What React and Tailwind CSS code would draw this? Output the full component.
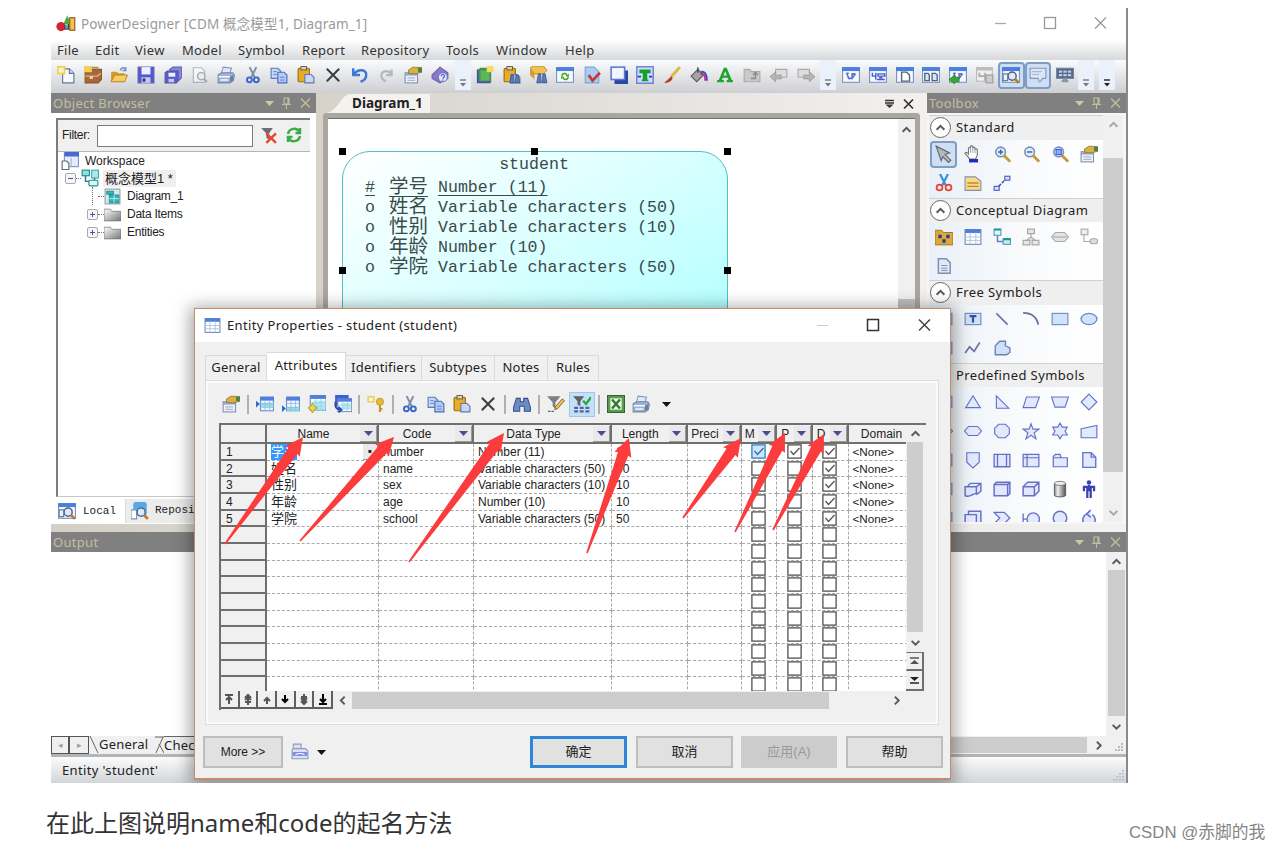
import React from "react";

const BLUE = "#4a5fc0";
const LINE = "#6670c8";

const page = <path d="M3 1.5h7l3 3v10H3z" fill="#fff" stroke="#7d8fae" />;
const win = (
  <>
    <rect x=".5" y="1.5" width="15" height="13" fill="#f4f8ff" stroke="#7b94c8" />
    <rect x="0" y="1" width="16" height="3.5" fill="#4a7fe0" />
  </>
);
const grid = (
  <>
    <rect x="1" y="1.5" width="14" height="13" fill="#fff" stroke="#7188b8" />
    <rect x="1" y="1" width="14" height="3.5" fill="#4f7fdc" />
    <path d="M1 8h14M1 11h14M5.5 4v10M10.5 4v10" stroke="#a9bfdf" strokeWidth=".8" />
  </>
);
const glass = (
  <>
    <circle cx="6.8" cy="6.2" r="4.3" fill="#dcecff" stroke="#7b8fb0" strokeWidth="1.4" />
    <path d="M10.5 10l4 4" stroke="#c99a36" strokeWidth="2.6" strokeLinecap="round" />
  </>
);
const props = (
  <>
    <rect x="1" y="6" width="11" height="9" fill="#eef3fb" stroke="#8292ae" />
    <path d="M1 7.500h11" stroke="#8fa3c6" strokeWidth="2" />
    <path d="M3 10.500h7M3 12.800h7" stroke="#a9b8d3" />
    <path d="M4 6.500V3.500l4-2.500 8 .5v4l-6 1.500z" fill="#d9b23d" stroke="#8a7430" strokeWidth=".7" />
    <path d="M12.500 1.500H16v4h-3.500z" fill="#4f7f4a" />
  </>
);
const clip = (
  <>
    <rect x="1" y="2" width="10" height="12" rx="1" fill="#e8ad27" stroke="#9a6b12" />
    <rect x="3.5" y=".5" width="5" height="3" fill="#d8d2bf" stroke="#5f5538" strokeWidth=".8" />
    <path d="M7 7.500h5.500l2.500 2.500v5H7z" fill="#c9d8f2" stroke="#5f79ae" />
  </>
);
const printer = (
  <>
    <path d="M5.500 1l7.500 1-2 5.500H3.500z" fill="#dfe9fb" stroke="#8797b7" strokeWidth=".9" />
    <path d="M1 8l3-2h10l1.500 2-1 5-3 2H1z" fill="#9fb2d0" stroke="#7385a8" strokeWidth=".9" />
    <path d="M1.500 9.500h10M3 12.500h7" fill="none" stroke="#f5f8ff" strokeWidth="1.400" />
    <path d="M11.500 9.500v5l3-2V8z" fill="#6b7f9f" />
  </>
);
const scissors = (
  <>
    <path d="M5 1l4.500 9M11 1L6.500 10" stroke="#7a8ca8" strokeWidth="1.700" />
    <circle cx="4.800" cy="12.300" r="2.200" fill="none" stroke="#3b66c8" strokeWidth="1.700" />
    <circle cx="11" cy="12.300" r="2.200" fill="none" stroke="#3b66c8" strokeWidth="1.700" />
  </>
);
const copy = (
  <>
    <path d="M1 2h6l2.500 2.500V11H1z" fill="#c5d8fa" stroke="#5a7ac0" />
    <path d="M7 5.500h5.500L15 8v7H7z" fill="#b3cbf6" stroke="#4a6bb5" />
    <path d="M3 5h3M3 7.500h3M9 10h4M9 12.500h4" stroke="#5a7ac0" strokeWidth=".8" />
  </>
);
const cross = <path d="M2.500 2.500l11 11M13.500 2.500l-11 11" stroke="#3d3d3d" strokeWidth="1.800" />;
const boxLinks = (
  <path d="M4 6l2 5h3V7h3M4 6.500h2M9 11l3-4" fill="none" stroke="#5f6fd2" strokeWidth="1.400" />
);

const icons = {
  logo: (
    <>
      <path d="M6 8l3-7 3 7z" fill="#49ad3c" />
      <rect x="11" y="3" width="4" height="10" fill="#f2c44c" stroke="#9f5f2c" />
      <circle cx="4" cy="10" r="3.700" fill="#d62430" />
      <path d="M7 8.500v3.500h3V8" fill="#5fb0a8" stroke="#59413d" />
    </>
  ),
  newDoc: (
    <>
      <path d="M5 2.500h6l4 4V15H5z" fill="#f6f9ff" stroke="#60789c" />
      <path d="M11 2.500v4h4" fill="#cdd9ec" stroke="#60789c" />
      <rect x=".7" y=".7" width="6" height="6" fill="#fbf3c4" stroke="#f0cf4c" strokeWidth="1.500" />
    </>
  ),
  briefcase: (
    <>
      <path d="M1 5.500L4 3h11.500v9l-3 3H1z" fill="#a8673a" stroke="#8a5630" />
      <path d="M1 9h11l3-2.500" stroke="#e0b083" fill="none" strokeWidth="1.300" />
      <path d="M7 3V1.500h5V3" fill="none" stroke="#b98b4d" strokeWidth="1.500" />
      <rect x="0" y="0" width="7" height="5.500" fill="#f2d057" />
      <path d="M5 9h3v2.500H5z" fill="#e8d2a0" />
    </>
  ),
  open: (
    <>
      <path d="M1 5h5l1.500 1.500H13V14H1z" fill="#d79a2b" />
      <path d="M1 14l3-6h11.500L13 14z" fill="#f8cd63" stroke="#b17d1e" strokeWidth=".8" />
      <path d="M9 4c1-3 4-3 5-1m0-2v3h-3" fill="none" stroke="#6f8fc2" strokeWidth="1.300" />
    </>
  ),
  save: (
    <>
      <rect x="1" y="1" width="14" height="14" fill="#5359c6" stroke="#5a5cb8" />
      <rect x="4" y="1" width="8" height="6.500" fill="#eef0ff" />
      <rect x="4" y="10" width="8" height="5" fill="#c6c9ee" />
      <rect x="5" y="11" width="2.500" height="3" fill="#34367c" />
    </>
  ),
  saveAll: (
    <>
      <path d="M5 3l3-2h8v9l-3 3z" fill="#8486dc" stroke="#5f60b5" />
      <path d="M1 6l2-1.500h9.500V13L11 15H1z" fill="#5b5ec9" stroke="#5455a8" />
      <rect x="4" y="6" width="6" height="3.500" fill="#eceeff" />
      <rect x="4" y="11.500" width="5" height="3" fill="#c2c5ee" />
    </>
  ),
  preview: (
    <g opacity=".55">
      {page}
      <circle cx="10" cy="9" r="3.300" fill="#eee" stroke="#808080" strokeWidth="1.300" />
      <path d="M12.500 11.500L15 14" stroke="#808080" strokeWidth="2" />
    </g>
  ),
  printer,
  scissors,
  copy,
  paste: clip,
  cross,
  undo: <path d="M2 2v6h6M2.500 7.500C6 2 14 3 13.500 8c0 3-2 5-5 6" fill="none" stroke="#3c78d8" strokeWidth="2.200" />,
  redo: <path d="M13 3v5H8M13 7.500C10 3 3 4 4 9c0 2 1.500 3.500 4 4.500" fill="none" stroke="#b5b8bb" strokeWidth="2" />,
  props,
  book: (
    <>
      <path d="M1 8l7-7 7 5v5l-7 4-7-4z" fill="#8a78cb" stroke="#7060b4" />
      <circle cx="10.500" cy="10" r="4" fill="#dfe6ff" stroke="#6b79c4" />
      <path d="M9 9c0-2 3-2 3 0 0 1-1.500 1-1.500 2.300m0 .7v1" fill="none" stroke="#4254b5" />
    </>
  ),
  greenBook: (
    <>
      <path d="M2 4l2-2h9v12H2z" fill="#3f9a48" stroke="#4a7f5f" />
      <path d="M4 4h8v9H4z" fill="#5cb45c" />
      <path d="M1.500 3v11.500H13" stroke="#3c55a4" strokeWidth="1.500" fill="none" />
      <rect x="9.500" y="0" width="6" height="5.500" fill="#f6dc61" />
    </>
  ),
  pasteFind: (
    <>
      {clip}
      <path d="M6 15l1.500-7h2l.5 7zM11 15l.5-7h2l1.500 7z" fill="#5d7cb8" stroke="#33518d" strokeWidth=".7" />
    </>
  ),
  boxFind: (
    <>
      <path d="M0 2l3-2h9l3 4-3 3H4z" fill="#f0c253" stroke="#a97920" strokeWidth=".7" />
      <path d="M0 2v6l4 4V6z" fill="#d99c33" />
      <path d="M6 15l1.500-8h2l.5 8zM11 15l.5-8h2L15 15z" fill="#5d7cb8" stroke="#33518d" strokeWidth=".7" />
    </>
  ),
  refreshWin: (
    <>
      {win}
      <path d="M5 8.500c1-2.500 4-2.500 5 0M11 10c-1 2.500-4 2.500-5 0" fill="none" stroke="#55aa1f" strokeWidth="1.600" />
      <path d="M11.500 6.500v3H9zM4.500 12V9H7z" fill="#55aa1f" />
    </>
  ),
  checkDoc: (
    <>
      <path d="M2 1h8l4 4v10H2z" fill="#a9cdf2" stroke="#7ba5d9" />
      <path d="M5 8l3.500 5L15 6" fill="none" stroke="#c53a35" strokeWidth="2.500" />
    </>
  ),
  shadowBox: (
    <>
      <rect x="4" y="4" width="12" height="12" fill="#274a9e" />
      <rect x="1" y="1" width="12" height="11" fill="#f1f5ff" stroke="#6076d2" strokeWidth="1.400" />
    </>
  ),
  textBox: (
    <>
      <rect x=".7" y=".7" width="14.600" height="14.600" fill="#cfdbff" stroke="#6a78d4" strokeWidth="1.200" />
      <path d="M3 3h10v3.500h-3V12h1v1.500H5V12h1V6.500H3z" fill="#13a324" />
      <path d="M1.500 9.500h3M11.500 9.500h3" stroke="#2f3fc0" strokeWidth="1.500" />
    </>
  ),
  brush: (
    <>
      <path d="M15 1L7 10" stroke="#e2b544" strokeWidth="2.600" />
      <path d="M7.500 9L1 15c3 0 6-1 7.500-4z" fill="#b5392c" />
    </>
  ),
  bucket: (
    <>
      <path d="M1 9l6-6 5 5-6 6z" fill="#a5a5a5" stroke="#5e5e5e" />
      <path d="M7 6V1" stroke="#444" strokeWidth="1.200" />
      <path d="M10 5c4 0 5 3 5 8" fill="none" stroke="#374cc8" strokeWidth="1.800" />
      <path d="M9 7c4 0 4.500 2 4.500 6" fill="none" stroke="#c8327a" strokeWidth="1.600" />
    </>
  ),
  bigA: <path d="M1 14.500v-2h1.500L7 1.500h2.500L14 12.500h1v2H9.500v-2H11l-.7-2H6l-.7 2H7v2zM6.700 8.500h3L8.200 4.700z" fill="#1fa52b" fillRule="evenodd" />,
  grayFolder: (
    <>
      <path d="M1 3h5l1.500 2H15v9H1z" fill="#c9c9c9" stroke="#aaa" />
      <path d="M7 11h4V6m-2 2l2-2.500L13 8" fill="none" stroke="#8d8d8d" strokeWidth="1.400" />
    </>
  ),
  grayLeft: (
    <>
      <path d="M5 6V3h10v7H9" fill="#ddd" stroke="#aaa" />
      <path d="M0 9.500L5 5v3h5v3.500H5V14z" fill="#b5b5b5" stroke="#929292" strokeWidth=".6" />
    </>
  ),
  grayRight: (
    <>
      <path d="M11 6V3H1v7h6" fill="#ddd" stroke="#aaa" />
      <path d="M16 9.500L11 5v3H6v3.500h5V14z" fill="#b5b5b5" stroke="#929292" strokeWidth=".6" />
    </>
  ),
  winLink: (
    <>
      {win}
      {boxLinks}
    </>
  ),
  winGrid: (
    <>
      {win}
      <path d="M3 6v3h3V6M6 9v3M8 7h6v2H8zM7 12h7M9 10.500h3" fill="none" stroke="#4a5cc8" strokeWidth="1.300" />
    </>
  ),
  winDoc: (
    <>
      {win}
      <path d="M5 5.500h4.500L12 8v5.500H5z" fill="#fff" stroke="#54637c" strokeWidth="1.200" />
    </>
  ),
  winDocs: (
    <>
      {win}
      <path d="M2.500 6.500h3l1 1.500v5h-4zM9 6.500h3L13.500 8v5H9z" fill="#dce5f3" stroke="#54637c" strokeWidth="1.200" />
    </>
  ),
  winGreen: (
    <>
      {win}
      {boxLinks}
      <path d="M0 12l5-4v2h4v4H5v2z" fill="#35aa32" stroke="#1d7a24" strokeWidth=".6" />
    </>
  ),
  winGray: (
    <>
      <rect x=".5" y="1.500" width="14" height="12" fill="#efefef" stroke="#bbb" />
      <rect x="0" y="1" width="15" height="3" fill="#bdbdbd" />
      <path d="M3 6v3h5V6M8 9v4" fill="none" stroke="#aaa" strokeWidth="1.500" />
      <rect x="9" y="8" width="6" height="7" fill="#ccc" stroke="#9d9d9d" />
    </>
  ),
  winFind: (
    <>
      {win}
      <circle cx="9" cy="9" r="3.600" fill="#dcebfb" stroke="#4d5c76" strokeWidth="1.300" />
      <path d="M11.500 11.500L15 15" stroke="#c07a2b" strokeWidth="2.500" />
      <path d="M1 7h4v6H1z" fill="#e9eef8" stroke="#6a7c9d" />
    </>
  ),
  note: (
    <>
      <path d="M1 2h14v9h-3l-2 3H9l-1-3H1z" fill="#dce5f5" stroke="#8496bb" />
      <path d="M3 5h8M3 7.500h6" stroke="#a5b4d2" />
    </>
  ),
  screen: (
    <>
      <rect x=".5" y="2" width="15" height="9" fill="#57647a" stroke="#7186a9" />
      <path d="M2.500 4h3v2h-3zM6.500 4h3v2h-3zM10.500 4h3v2h-3zM2.500 7h3v2h-3zM6.500 7h3v2h-3zM10.500 7h3v2h-3z" fill="#b9cbf2" />
      <path d="M5 13.500h6M6 12h4" stroke="#8997ae" strokeWidth="2" />
    </>
  ),
  filterOff: (
    <>
      <path d="M1 1h11L8.500 6v6L6 10V6z" fill="#6b6f77" />
      <path d="M6 6l9 9M15 6l-9 9" stroke="#e8452c" strokeWidth="2.200" />
    </>
  ),
  refresh: (
    <path d="M2 7C3 1 11 0 13.500 5M14 9c-1 6-9 7-11.500 2M14 1v5H9.500M2 15v-5h4.500" fill="none" stroke="#3faa48" strokeWidth="2.500" />
  ),
  workspace: (
    <>
      <rect x="3" y="1" width="12.500" height="12" fill="#e6edfa" stroke="#7f97cb" />
      <rect x="3" y="0" width="13" height="4" fill="#4668d0" />
      <path d="M1 8h4l2 2v5.500H1z" fill="#fff" stroke="#5d6b82" />
      <path d="M9 5v8" stroke="#9fb3dc" />
    </>
  ),
  model: (
    <>
      <rect x="1" y="1" width="6.500" height="5" fill="#8fe0e0" stroke="#238b93" />
      <rect x="9.500" y="1" width="6" height="7" fill="#a7ecec" stroke="#49a9b0" />
      <path d="M4 6v5h4M12 8v3" fill="none" stroke="#1f7f88" strokeWidth="1.300" />
      <rect x="7" y="10" width="8" height="5" rx="1" fill="#d7f8f6" stroke="#238b93" />
    </>
  ),
  diagram: (
    <>
      <rect x="1" y="1" width="14" height="14" fill="#d7e8e8" stroke="#8f9fa3" />
      <path d="M2.500 3H9v3H2.500zM5 6.500h9V14H5z" fill="#2fb7ba" stroke="#15787e" strokeWidth=".6" />
      <path d="M5 10h9M9.500 6.500V14" stroke="#c7f4f3" strokeWidth=".8" />
    </>
  ),
  folder: <path d="M0 14V3h6l2 2h8v9z" fill="url(#folderGray)" stroke="#777" strokeWidth=".7" />,
  globe: (
    <>
      <rect x="2" y="0" width="12" height="12" rx="2" fill="#57a9e4" />
      <path d="M0 7h5v8H0z" fill="#fff" stroke="#7f93b5" />
      <circle cx="9" cy="9" r="3.600" fill="#dcebfb" stroke="#4d6b96" strokeWidth="1.300" />
      <path d="M11.500 11.500L15 15" stroke="#c07a2b" strokeWidth="2.500" />
    </>
  ),
  pointer: <path d="M1 1l12 6-4 1.500 5 5-2 2-5-5L5.500 14z" fill="#b4b8bd" stroke="#62676f" />,
  hand: (
    <>
      <path d="M4 11L1 7.500c0-1.500 2-1 3 .5V3c0-1.300 1.800-1.300 1.800 0V1.500c0-1.300 2-1.300 2 0V3c0-1.500 2-1.500 2 0v1.500c0-1.500 2-1.200 2 0V9l-1.500 3.500H5z" fill="#fff" stroke="#777" />
      <path d="M5.800 3v4M7.800 3v4M9.800 4v3.500" stroke="#888" strokeWidth=".7" />
      <rect x="4.500" y="12.500" width="8" height="3" fill="#1a28c4" />
    </>
  ),
  zoomIn: (
    <>
      {glass}
      <path d="M4.500 6.200h4.600M6.800 4v4.500" stroke="#3b62b0" strokeWidth="1.300" />
    </>
  ),
  zoomOut: (
    <>
      {glass}
      <path d="M4.500 6.200h4.600" stroke="#3b62b0" strokeWidth="1.300" />
    </>
  ),
  zoomFit: (
    <>
      {glass}
      <rect x="4.500" y="4" width="4.600" height="4.500" fill="#8caeff" stroke="#3f62e8" />
    </>
  ),
  redScissors: (
    <>
      <path d="M4.500 0l5 10M11.500 0l-5 10" stroke="#3a8fe0" strokeWidth="2" />
      <circle cx="4" cy="12" r="2.600" fill="none" stroke="#e5432f" strokeWidth="1.600" />
      <circle cx="12" cy="12" r="2.600" fill="none" stroke="#e5432f" strokeWidth="1.600" />
    </>
  ),
  yellowNote: (
    <>
      <path d="M1 2.500h9l5 4v8H1z" fill="#f7d987" stroke="#8a8fae" />
      <path d="M3 8h10M3 11h10" stroke="#b98b33" strokeWidth="1.300" />
    </>
  ),
  link: (
    <>
      <path d="M5 11l6-6" stroke="#3f4db8" strokeWidth="1.300" strokeDasharray="3 1" />
      <rect x="1" y="11" width="4.500" height="3.500" fill="#dbe2ff" stroke={BLUE} />
      <rect x="10.500" y="2" width="4.500" height="3.500" fill="#dbe2ff" stroke={BLUE} />
    </>
  ),
  package: (
    <>
      <path d="M0 2h6l1.500 2H16v11H0z" fill="#dfa93a" stroke="#9c7022" strokeWidth=".8" />
      <path d="M3 6h3v3H3zM10 6h3v3h-3zM6.500 10h3v3h-3z" fill="#2d3a9a" />
    </>
  ),
  grid,
  relation: (
    <>
      <path d="M4 7v5h5" fill="none" stroke="#6b74d4" strokeWidth="1.300" />
      <rect x="1" y="1" width="6" height="5.500" fill="#dcfafa" stroke="#4f9fb0" />
      <rect x="9" y="9.500" width="6.500" height="5" fill="#bff1f1" stroke="#4f9fb0" />
      <path d="M1 1.500h6M9 10h6.500" stroke="#1f8f98" strokeWidth="1.600" />
    </>
  ),
  inherit: (
    <path d="M5 1h6v4H5zM1 11h6v4H1zM9 11h6v4H9zM8 5v3M4 11l4-3 4 3" fill="#e8e8e8" stroke="#a9a9a9" strokeWidth="1.100" />
  ),
  assoc: (
    <>
      <path d="M4 4h8l3.500 4-3.500 4H4L.5 8z" fill="#e3e3e3" stroke="#a9a9a9" />
      <path d="M2 8h12" stroke="#a9a9a9" />
    </>
  ),
  assocLink: (
    <>
      <path d="M3.500 6v6H9" fill="none" stroke="#a9a9a9" />
      <rect x="1" y="1" width="6" height="5" fill="#eee" stroke="#a9a9a9" />
      <rect x="9" y="9.500" width="6.500" height="4.500" rx="2" fill="#ddd" stroke="#a9a9a9" />
    </>
  ),
  file: (
    <>
      <path d="M3 1.500h7l3.500 3.500v9.500H3z" fill="#dfe9f8" stroke="#7f90ae" strokeWidth="1.300" />
      <path d="M5.500 7.500h5.500M5.500 10h5.500M5.500 12h5.500" stroke="#7e92b6" />
    </>
  ),
  tBox: (
    <>
      <rect x="1" y="3" width="14" height="10" fill="#cfe0fb" stroke="#6f8ac2" />
      <path d="M5 5.500h6M8 5.500v5.500" stroke="#3b4fa0" strokeWidth="2" />
    </>
  ),
  line: <path d="M3 3l10 10" stroke="#66719e" strokeWidth="1.400" />,
  arc: <path d="M1 2.500C8 2.500 13 6 14.500 13" fill="none" stroke="#66719e" strokeWidth="1.600" />,
  rect: <rect x="1" y="3" width="14" height="10" fill="#cfe3fb" stroke="#6a8cc8" />,
  ellipse: <ellipse cx="8" cy="8" rx="7" ry="5" fill="#cfe3fb" stroke="#6a8cc8" strokeWidth="1.200" />,
  poly: <path d="M1 12.500L5 7l4 4 5-8" fill="none" stroke="#66719e" strokeWidth="1.500" />,
  freeform: <path d="M2 14V6l4-4h5c1 2-1 3 0 4l4 2v4l-3 2z" fill="#cfe0fb" stroke="#6a7fb8" strokeWidth="1.200" />,
  triangle: <path d="M8 2.500L14.500 13h-13z" fill="#e1eafd" stroke={LINE} />,
  rtriangle: <path d="M3 2.500L14 13.500H3z" fill="#e1eafd" stroke={LINE} />,
  parallelogram: <path d="M4 3.500h11.500L12 13H1z" fill="#e1eafd" stroke={LINE} />,
  trapezoid: <path d="M.5 3.500h15L12.500 12.500h-9z" fill="#e1eafd" stroke={LINE} />,
  diamond: <path d="M8 1l7 7-7 7-7-7z" fill="#e1eafd" stroke={LINE} />,
  hexagon: <path d="M4 4h8l3.500 4-3.500 4H4L.5 8z" fill="#e1eafd" stroke={LINE} />,
  octagon: <path d="M5 2h6l3.500 3.500v5L11 14H5l-3.500-3.500v-5z" fill="#e1eafd" stroke={LINE} />,
  star: <path d="M8 1.500l1.700 4.800H15l-4.200 3.200L12.500 15 8 11.800 3.500 15l1.700-5.500L1 6.300h5.300z" fill="#e1eafd" stroke={LINE} />,
  star6: <path d="M8 1l2 3.500h4.500L12.500 8l2 3.500H10L8 15l-2-3.500H1.500l2-3.500-2-3.500H6z" fill="#e1eafd" stroke={LINE} />,
  manual: <path d="M1 6l14-3v11H1z" fill="#e1eafd" stroke={LINE} />,
  shield: <path d="M2.500 1.500h11V10L8 15l-5.500-5z" fill="#e1eafd" stroke={LINE} />,
  process: <path d="M1 3h14v11H1zM4 3v11M12 3v11" fill="#e1eafd" stroke={LINE} strokeWidth="1.200" />,
  storage: <path d="M1 3h14v11H1zM1 6h14M4.500 3v11" fill="#e1eafd" stroke={LINE} strokeWidth="1.100" />,
  tabFolder: <path d="M2 14V5l2-2h4l1 3h5.500v8zM2 6h7" fill="#e1eafd" stroke={LINE} strokeWidth="1.100" />,
  docFold: <path d="M2.500 1.500H10l4 4v9H2.500zM10 1.500v4h4" fill="#e1eafd" stroke={LINE} strokeWidth="1.200" />,
  stackDoc: <path d="M1 6h10v6c-4 0-5 4-10 2zM3 6l2.500-3H15v7l-4 3M11 6l4-3" fill="#e1eafd" stroke={LINE} strokeWidth="1.300" />,
  bevel: <path d="M1 4l2-2h12v10l-2 2H1zM1 4h12v10M13 4l2-2" fill="#e1eafd" stroke={LINE} strokeWidth="1.300" />,
  cube: <path d="M1 6l4-4h10v8l-4 4H1zM1 6h10v8M11 6l4-4" fill="#e1eafd" stroke={LINE} strokeWidth="1.300" />,
  cylinder: (
    <>
      <path d="M3 3v10.500c0 2 10 2 10 0V3z" fill="url(#cyl)" stroke="#555" strokeWidth=".8" />
      <ellipse cx="8" cy="3" rx="5" ry="1.800" fill="#eee" stroke="#777" strokeWidth=".8" />
    </>
  ),
  person: (
    <>
      <circle cx="8" cy="2.300" r="2" fill="#3b3fb5" />
      <path d="M8 4.500V10M3.500 10V6h9v4M6.500 6v10M9.500 6v10" fill="none" stroke="#3b3fb5" strokeWidth="2" />
    </>
  ),
  frames: <path d="M4 5V2h11v12h-4M1 5h10v11H1z" fill="#e1eafd" stroke={LINE} strokeWidth="1.300" />,
  chevronShape: <path d="M1 3h9l5 5-5 5H1l5-5z" fill="#e1eafd" stroke={LINE} strokeWidth="1.100" />,
  circleBar: <path d="M1 4v10M1 9h3M15.500 9a5.500 5.500 0 1 1-11 0 5.500 5.500 0 0 1 11 0z" fill="#e1eafd" stroke={LINE} strokeWidth="1.200" />,
  circle: <circle cx="8" cy="8" r="6" fill="#e1eafd" stroke={LINE} strokeWidth="1.300" />,
  control: <path d="M6 4.500a5.500 5.500 0 1 0 5 .5M9.500 1L6 4.300 9.500 7.500" fill="#e1eafd" stroke={LINE} strokeWidth="1.400" />,
  insertRow: (
    <>
      <rect x="4" y="2" width="11.500" height="12" fill="#f2f7ff" stroke="#6f8fc9" />
      <rect x="4" y="1.500" width="12" height="3.500" fill="#4f7fdc" />
      <rect x="4.500" y="7" width="11" height="3.500" fill="#7fe3ea" />
      <path d="M4 7.500h11.500M4 11h11.500M8 5v9M12 5v9" stroke="#9fb9e2" strokeWidth=".8" />
      <path d="M0 5l3.500 3L0 11z" fill="#3567d8" />
    </>
  ),
  addRow: (
    <>
      <rect x="4" y="2" width="11.500" height="12" fill="#f2f7ff" stroke="#6f8fc9" />
      <rect x="4" y="1.500" width="12" height="3.500" fill="#4f7fdc" />
      <rect x="4.500" y="10.500" width="11" height="3.500" fill="#7fe3ea" />
      <path d="M4 7.500h11.500M4 11h11.500M8 5v9M12 5v9" stroke="#9fb9e2" strokeWidth=".8" />
      <path d="M0 9l3.500 3L0 15z" fill="#3567d8" />
    </>
  ),
  gridStar: (
    <>
      <g transform="translate(1 -1)">{grid}</g>
      <rect x="5" y="5" width="10" height="9" fill="#8cdff0" opacity=".7" />
      <path d="M4 7l1.500 3 3 1.500-3 1.500L4 16l-1.500-3-2.500-1.500L2.500 10z" fill="#f4d844" stroke="#b08d17" strokeWidth=".7" />
    </>
  ),
  gridReplace: (
    <>
      <rect x="1" y="0" width="12" height="10" fill="#3b5fd0" />
      <g transform="translate(2.500 2) scale(.88)">{grid}</g>
      <rect x="7" y="7" width="7.500" height="6" fill="#8cdff0" opacity=".7" />
      <path d="M1.500 6c-1 5 1 7 4 7m-1.500-2.500L6.500 13 4 15.500" fill="none" stroke="#2346b8" strokeWidth="1.700" />
    </>
  ),
  keys: (
    <>
      <rect x="1" y="1.500" width="5" height="4.500" fill="#fbf5d8" stroke="#eed062" strokeWidth="1.500" />
      <circle cx="11.500" cy="6" r="3.200" fill="#e7b93a" stroke="#c0952e" strokeWidth=".8" />
      <path d="M11.500 9v6M11.500 12.500h2.200" stroke="#c99628" strokeWidth="1.900" />
    </>
  ),
  binoculars: (
    <path d="M3 3h3.500v3h3V3H13l2.500 8v3.500H10V10H6v4.500H.5V11z" fill="#6d8cc6" stroke="#324f8c" strokeWidth=".9" />
  ),
  filterEdit: (
    <>
      <path d="M0 1h12L7.500 6.500V12L5 10V6.500z" fill="#7c7f86" />
      <path d="M15.500 5l-6 7-2.500 1 .5-2.500L13.500 3.500z" fill="#f0c65a" stroke="#7a5320" strokeWidth=".8" />
      <path d="M1 14.500h6" stroke="#555" strokeDasharray="2 1" />
    </>
  ),
  filterOn: (
    <>
      <path d="M0 1h10L6.500 5.500V10L4 8.500v-3z" fill="#5e6268" />
      <path d="M9 5l2.500 3L16 2" fill="none" stroke="#25a834" strokeWidth="2" />
      <path d="M1 11.500h14M1 14.500h14" stroke="#4b66ad" strokeWidth="2" strokeDasharray="3.500 1.500" />
    </>
  ),
  excel: (
    <>
      <rect x=".5" y=".5" width="15" height="15" fill="#5f9f55" stroke="#2f6a2c" />
      <rect x="3" y="3" width="10" height="10" fill="#eff8ec" />
      <path d="M4.500 4l7 8M11.500 4l-7 8" stroke="#2c7a2b" strokeWidth="2.200" />
    </>
  ),
  stackPrint: (
    <>
      <path d="M2 1h7v4H2zM2 5h11l2 2v7H1V6z" fill="#d9e0ef" stroke="#8f9cba" />
      <path d="M1.500 8h13v3.500h-13z" fill="#7f8be8" />
      <path d="M4 10.500c2-1.500 6-1.500 8 0" stroke="#fff" fill="none" />
    </>
  ),
};

const Icon = ({ name, size = 18 }) => (
  <svg width={size} height={size} viewBox="0 0 16 16" className="shrink-0">
    {icons[name]}
  </svg>
);

const Chevron = ({ dir = "up", light }) => {
  const d = {
    up: "M1.500 7L5 3.500 8.500 7",
    down: "M1.500 3.500L5 7l3.500-3.500",
    left: "M7 1.500L3.500 5 7 8.500",
    right: "M3.500 1.500L7 5 3.500 8.500",
  }[dir];
  return (
    <svg width="11" height="11" viewBox="0 0 10 10" className="shrink-0">
      <path d={d} fill="none" stroke={light ? "#a8a8a8" : "#5a5a5a"} strokeWidth="1.800" />
    </svg>
  );
};

const Caret = ({ color = "#111" }) => (
  <svg width="9" height="5" viewBox="0 0 9 5" className="shrink-0">
    <path d="M0 0h9L4.500 5z" fill={color} />
  </svg>
);

const More = ({ dark }) => (
  <svg width="8" height="8" viewBox="0 0 8 8">
    <path d="M1 1h6" stroke={dark ? "#222" : "#777"} strokeWidth="1.400" />
    <path d="M1 4h6L4 7.500z" fill={dark ? "#222" : "#777"} />
  </svg>
);

const PanelHeader = ({ title }) => (
  <div className="flex h-5 shrink-0 items-center bg-[#808080] pl-0.5 text-[13px] text-[#c3bf9c]">
    <span className="flex-1 pt-px tracking-[0.300px]">{title}</span>
    <Caret color="#cdc9a0" />
    <svg width="34" height="12" viewBox="0 0 34 12" className="ml-2">
      <path d="M2 1h5v6H2zM0 7.500h9M4.500 8v4M6 1v6" fill="none" stroke="#c3bf9c" strokeWidth="1.100" />
      <path d="M19 1.500l9 9M28 1.500l-9 9" stroke="#c3bf9c" strokeWidth="1.300" />
    </svg>
  </div>
);

const menus = [
  ["File", "w-[38px]"],
  ["Edit", "w-[40px]"],
  ["View", "w-[47px]"],
  ["Model", "w-[56px]"],
  ["Symbol", "w-[64px]"],
  ["Report", "w-[59px]"],
  ["Repository", "w-[85px]"],
  ["Tools", "w-[50px]"],
  ["Window", "w-[69px]"],
  ["Help", "w-[40px]"],
];

const toolbarA = ["newDoc", "briefcase", "open", "save", "saveAll", "preview", "printer", "scissors", "copy", "paste", "cross", "undo", "redo", "props", "book"];
const toolbarB = ["greenBook", "pasteFind", "boxFind", "refreshWin", "checkDoc", "shadowBox", "textBox", "brush", "bucket", "bigA", "grayFolder", "grayLeft", "grayRight"];
const toolbarC = ["winLink", "winGrid", "winDoc", "winDocs", "winGreen", "winGray", "winFind", "note", "screen"];

const ToolGroup = ({ items, active = [] }) => (
  <div className="flex h-[30px] items-center">
    {items.map((name) => (
      <div
        key={name}
        className={`flex h-[27px] w-[26.700px] shrink-0 items-center justify-center ${
          active.includes(name) ? "rounded-sm border-2 border-[#7f9dc4] bg-[#cfdff3]" : ""
        }`}
      >
        <Icon name={name} />
      </div>
    ))}
  </div>
);

const Overflow = ({ dark }) => (
  <div className="flex h-[30px] w-4 shrink-0 items-end justify-center bg-[#ebf1fa] pb-[3px]">
    <More dark={dark} />
  </div>
);

const TreeBox = ({ sign }) => (
  <svg width="11" height="11" viewBox="0 0 11 11" className="shrink-0">
    <rect x=".5" y=".5" width="10" height="10" rx="1.500" fill="#f6f6f6" stroke="#a9a9a9" />
    <path d={sign === "+" ? "M3 5.500h5M5.500 3v5" : "M3 5.500h5"} stroke="#3c55b5" />
  </svg>
);

function ObjectBrowser() {
  return (
    <div className="flex w-[265px] shrink-0 flex-col bg-white">
      <PanelHeader title="Object Browser" />
      <div className="mt-[5px] ml-[5px] flex h-[379px] w-[254px] flex-col border-t-2 border-b border-l-2 border-[#7c7c7c] border-b-[#c8c8c8] [font-family:'Liberation_Sans','Noto_Sans_CJK_SC',sans-serif] text-xs">
        <div className="flex h-[32px] items-center border-b border-[#b5b5b5] bg-[#f0f0f0] pl-[4px]">
          <span className="w-[35px] pb-[2px] tracking-[-0.300px]">Filter:</span>
          <div className="h-[22px] w-[156px] shrink-0 border border-[#7a7a7a] bg-white" />
          <span className="ml-[7px] flex w-[42px] shrink-0 justify-between">
            <Icon name="filterOff" size={17} />
            <Icon name="refresh" size={16} />
          </span>
        </div>
        <div className="flex h-[17px] items-center pl-[3px]">
          <Icon name="workspace" />
          <span className="ml-[6px]">Workspace</span>
        </div>
        <div className="flex h-[18px] items-center pl-[7px]">
          <TreeBox sign="-" />
          <span className="w-[5px] border-t border-dotted border-gray-500" />
          <Icon name="model" />
          <span className="ml-[4px] bg-[#efefef] pr-[3px] pl-0.5 text-[13px] leading-[17px]">概念模型1 *</span>
        </div>
        {["Diagram_1", "Data Items", "Entities"].map((label, i) => (
          <div key={label} className="flex h-[18px] items-center pl-[29px]">
            {i ? <TreeBox sign="+" /> : <span className="ml-[5px] h-[18px] w-[6px] border-l border-dotted border-gray-500" />}
            <span className="w-[6px] border-t border-dotted border-gray-500" />
            <Icon name={i ? "folder" : "diagram"} size={17} />
            <span className="ml-[6px] tracking-[-0.250px]">{label}</span>
          </div>
        ))}
      </div>
      <div className="mt-[2px] flex h-[24px] [font-family:'Liberation_Mono',monospace] text-[11px]">
        <div className="flex w-[74px] items-center bg-white pl-[7px]">
          <Icon name="winFind" />
          <span className="ml-[7px]">Local</span>
        </div>
        <div className="flex flex-1 items-center border-l border-[#ddd] bg-[#ececec] pl-[5px]">
          <Icon name="globe" />
          <span className="ml-[6px] pb-0.5">Reposi</span>
        </div>
      </div>
    </div>
  );
}

const entityRows = [
  ["#", "学号", "Number (11)"],
  ["o", "姓名", "Variable characters (50)"],
  ["o", "性别", "Variable characters (10)"],
  ["o", "年龄", "Number (10)"],
  ["o", "学院", "Variable characters (50)"],
];

const Handle = ({ at }) => <span className={`absolute h-[7px] w-[7px] bg-black ${at}`} />;

function DiagramArea() {
  return (
    <div className="flex w-[611px] shrink-0 flex-col bg-gradient-to-r from-[#d6d2ca] to-[#f2f1f0] pl-[7px]">
      <div className="flex h-[20px] items-end justify-between pr-[12px]">
        <div className="flex h-[19px]">
          <svg width="28" height="19" viewBox="0 0 28 19" className="ml-1">
            <path d="M0 19C12 16 14 0 24 0h4v19z" fill="#f3f2ef" />
          </svg>
          <div className="-ml-px flex w-[76px] items-center bg-[#f3f2ef] text-[13.500px] font-bold text-[#222]">
            <span className="-ml-[2px]">Diagram_1</span>
          </div>
        </div>
        <svg width="32" height="20" viewBox="0 0 32 20">
          <path d="M2 7.500h9M2 10h9" stroke="#333" strokeWidth="1.500" />
          <path d="M2.500 11.500h8L6.500 15z" fill="#333" />
          <path d="M21 6.500l9 9M30 6.500l-9 9" stroke="#333" strokeWidth="1.700" />
        </svg>
      </div>
      <div className="mr-[7px] flex flex-1 rounded-t-sm border-x-[5px] border-t-[5px] border-[#a9a7a0] bg-white">
        <div className="relative flex-1 overflow-hidden border-t border-[#6f6f6f] bg-white [font-family:'Liberation_Mono','Noto_Sans_CJK_SC',monospace] text-[16.600px] text-[#3a4a4a]">
          {/* entity symbol on the canvas */}
          <div className="absolute top-[32px] left-[14px] h-[239px] w-[386px] rounded-[28px] border border-[#4fbfc0] bg-gradient-to-br from-white to-[#a4ffff]">
            <p className="pt-[3px] pr-[2px] text-center leading-[20px]">student</p>
            {entityRows.map(([mark, cn, type], i) => (
              <div key={cn} className={`flex h-[19.800px] items-center pl-[22px] ${i ? "" : "mt-[4px] underline underline-offset-3"}`}>
                <span className="w-[24px]">{mark}</span>
                <span className="w-[49px] text-[19.500px] leading-[19px]">{cn}</span>
                <span className="whitespace-pre">{type}</span>
              </div>
            ))}
            <Handle at="-top-[4px] -left-[4px]" />
            <Handle at="-top-[4px] left-[188px]" />
            <Handle at="-top-[4px] -right-[4px]" />
            <Handle at="top-[115px] -left-[4px]" />
            <Handle at="top-[115px] -right-[4px]" />
          </div>
        </div>
        <div className="flex w-[17px] flex-col items-center border-t border-[#6f6f6f] bg-[#f0f0f0] pt-[5px]">
          <Chevron />
          <div className="mt-[164px] w-full flex-1 bg-[#c1c1c1]" />
        </div>
      </div>
    </div>
  );
}

const toolbox = [
  ["Standard", ["pointer", "hand", "zoomIn", "zoomOut", "zoomFit", "props", "redScissors", "yellowNote", "link"]],
  ["Conceptual Diagram", ["package", "grid", "relation", "inherit", "assoc", "assocLink", "file"]],
  ["Free Symbols", ["rect", "tBox", "line", "arc", "rect", "ellipse", "rect", "poly", "freeform"]],
  [
    "Predefined Symbols",
    [
      "rect", "triangle", "rtriangle", "parallelogram", "trapezoid", "diamond",
      "hexagon", "hexagon", "octagon", "star", "star6", "manual",
      "rect", "shield", "process", "storage", "tabFolder", "docFold",
      "rect", "stackDoc", "bevel", "cube", "cylinder", "person",
      "rect", "frames", "chevronShape", "circleBar", "circle", "control",
    ],
  ],
];

function Toolbox() {
  return (
    <div className="flex flex-1 flex-col bg-[#f6f6f6]">
      <PanelHeader title="Toolbox" />
      <div className="flex h-[409px] overflow-hidden pt-[2px]">
        <div className="ml-[2px] w-[174px] bg-gradient-to-r from-[#e9f0f7] via-[#f8fafc] to-white">
          {toolbox.map(([title, items]) => (
            <div key={title}>
              <div className="flex h-[24.500px] items-center border-t border-[#d0d0d0] bg-[#efefef] text-[13px] text-[#222]">
                <span className="ml-px flex h-[21px] w-[21px] shrink-0 items-center justify-center rounded-full border-[1.500px] border-[#666] bg-white">
                  <Chevron />
                </span>
                <span className="ml-[5px] tracking-[0.400px] whitespace-nowrap">{title}</span>
              </div>
              <div className="grid grid-cols-6">
                {items.map((name, i) => (
                  <div key={i} className="flex h-[29px] items-center justify-center">
                    <span
                      className={`flex h-[27px] w-[27px] items-center justify-center ${
                        name === "pointer" ? "rounded-sm border-2 border-[#7f9dc4] bg-[#cfdff3]" : ""
                      }`}
                    >
                      <Icon name={name} />
                    </span>
                  </div>
                ))}
              </div>
            </div>
          ))}
        </div>
        <div className="flex w-[20px] flex-col items-center bg-[#f0f0f0] pt-[4px]">
          <Chevron light />
          <div className="mt-[28px] h-[314px] w-full shrink-0 bg-[#cdcdcd]" />
          <div className="mt-[35px]">
            <Chevron dir="down" light />
          </div>
        </div>
      </div>
    </div>
  );
}

function Output() {
  return (
    <div className="flex h-[225px] shrink-0 flex-col border-b-[3px] border-[#b4b4b4] bg-white">
      <PanelHeader title="Output" />
      <div className="flex h-[184px] justify-end">
        <div className="flex w-[20px] flex-col items-center bg-[#f0f0f0] pt-[4px]">
          <Chevron />
          <div className="mt-[3px] h-[146px] w-[17px] bg-[#cdcdcd]" />
          <div className="mt-[5px]">
            <Chevron dir="down" />
          </div>
        </div>
      </div>
      <div className="flex h-[18px] items-stretch bg-[#f0f0f0] text-[13px]">
        <div className="flex w-[18px] items-center justify-center border border-[#555] text-[9px] text-gray-400">◂</div>
        <div className="flex w-[20px] items-center justify-center border border-[#555] text-[9px] text-gray-400">▸</div>
        <svg width="10" height="18" viewBox="0 0 10 18">
          <path d="M1 0l8 17" stroke="#666" fill="none" />
        </svg>
        <span className="w-[55px] leading-[17px] tracking-[0.200px]">General</span>
        <svg width="10" height="18" viewBox="0 0 10 18">
          <path d="M9 1L2 17M1 1h9M5 8l5 9" stroke="#666" fill="none" />
        </svg>
        <span className="flex-1 border-t border-[#666] leading-[16px] tracking-[0.200px]">Chec</span>
        <div className="my-[1px] w-[300px] bg-[#cdcdcd]" />
        <div className="flex w-[22px] items-center justify-center">
          <Chevron dir="right" />
        </div>
        <svg width="17" height="18" viewBox="0 0 17 18">
          <path d="M12 8h2M9 11h2M12 11h2M6 14h2M9 14h2M12 14h2" stroke="#bbb" strokeWidth="2" />
        </svg>
      </div>
    </div>
  );
}

const dialogTabs = [
  ["General", "w-[62px]"],
  ["Attributes", "w-[79px]"],
  ["Identifiers", "w-[76px]"],
  ["Subtypes", "w-[73px]"],
  ["Notes", "w-[53px]"],
  ["Rules", "w-[51px]"],
];

const dialogTools = [
  ["props"],
  ["insertRow", "addRow", "gridStar", "gridReplace"],
  ["keys"],
  ["scissors", "copy", "paste", "cross"],
  ["binoculars"],
  ["filterEdit", "filterOn"],
  ["excel", "printer"],
];

const columns = [
  ["", "w-[46px]", false],
  ["Name", "w-[112px]", true],
  ["Code", "w-[95px]", true],
  ["Data Type", "w-[138px]", true],
  ["Length", "w-[75.500px]", true],
  ["Preci", "w-[54px]", true],
  ["M", "w-[35.500px]", true],
  ["P", "w-[35.500px]", true],
  ["D", "w-[36px]", true],
  ["Domain", "w-[59px]", false],
];

const attributes = [
  { name: "学号", code: "number", type: "Number (11)", length: "11", m: true, p: true },
  { name: "姓名", code: "name", type: "Variable characters (50)", length: "50" },
  { name: "性别", code: "sex", type: "Variable characters (10)", length: "10" },
  { name: "年龄", code: "age", type: "Number (10)", length: "10" },
  { name: "学院", code: "school", type: "Variable characters (50)", length: "50" },
];
const rows = Array.from({ length: 15 }, (_, i) => attributes[i] || {});

const cell = "shrink-0 overflow-hidden whitespace-nowrap border-r border-b border-dashed border-[#a8a8a8] pl-[4px]";

const Check = ({ on, blue }) => (
  <svg width="15" height="15" viewBox="0 0 15 15">
    <rect x=".9" y=".9" width="13.200" height="13.200" fill={blue ? "#cfe6fa" : "#fff"} stroke={blue ? "#2f7fc4" : "#505050"} strokeWidth="1.300" />
    {on && <path d="M3.500 7l3 3.500 6-6.500" fill="none" stroke={blue ? "#2f6da8" : "#555"} strokeWidth="1.300" />}
  </svg>
);

function AttributeGrid() {
  return (
    <div className="ml-[13px] flex h-[287px] w-[707px] flex-col border-t-2 border-l-2 border-[#6f6f6f] [font-family:'Liberation_Sans','Noto_Sans_CJK_SC',sans-serif] text-xs text-[#222]">
      <div className="flex h-[266px]">
        <div className="w-[685px] overflow-hidden bg-white">
          <div className="flex h-[19px] bg-[#f0f0f0]">
            {columns.map(([label, width, menu], i) => (
              <div key={i} className={`flex shrink-0 items-center border-r-2 border-b-2 border-[#6f6f6f] ${width} ${i === 9 ? "border-r-0" : ""}`}>
                <span className={`flex-1 text-center ${i === 9 ? "pl-[9px]" : ""}`}>{label}</span>
                {menu && (
                  <span className="flex h-[16px] w-[17px] shrink-0 items-center justify-center border-r border-b border-[#999] bg-[#e9e9e9]">
                    <Caret color="#4a4a96" />
                  </span>
                )}
              </div>
            ))}
          </div>
          {rows.map((row, i) => (
            <div key={i} className="flex h-[16.680px] leading-[16px]">
              <div className="w-[46px] shrink-0 border-r-2 border-b-2 border-[#6f6f6f] bg-[#f0f0f0] pl-[5px]">{row.name && i + 1}</div>
              <div className={`${cell} flex w-[112px] justify-between text-[13px]`}>
                {i ? row.name : <span className="bg-[#3399ff] text-white">{row.name}</span>}
                {!i && <span className="w-[15px] border-r border-b border-[#999] bg-[#e9e9e9] text-center text-[6px] leading-[15px]">■</span>}
              </div>
              <div className={`${cell} w-[95px]`}>{row.code}</div>
              <div className={`${cell} w-[138px]`}>{row.type}</div>
              <div className={`${cell} w-[75.500px]`}>{row.length}</div>
              <div className={`${cell} w-[54px]`} />
              <div className={`${cell} w-[35.500px] pl-[9.500px]`}>
                <Check on={row.m} blue={row.m} />
              </div>
              <div className={`${cell} w-[35.500px] pl-[9.500px]`}>
                <Check on={row.p} />
              </div>
              <div className={`${cell} w-[36px] pl-[9.500px]`}>
                <Check on={!!row.name} />
              </div>
              <div className="w-[59px] shrink-0 border-b border-dashed border-[#a8a8a8] pl-[4px] text-[11.700px]">{row.name && "<None>"}</div>
            </div>
          ))}
        </div>
        <div className="flex w-[18px] flex-col items-center bg-[#f0f0f0] pt-[3px]">
          <Chevron />
          <div className="mt-[3px] h-[190px] w-[16px] shrink-0 bg-[#cdcdcd]" />
          <div className="flex h-[20px] shrink-0 items-center">
            <Chevron dir="down" />
          </div>
          <div className="flex h-[19px] w-full shrink-0 items-center justify-center border border-r-2 border-b-2 border-[#6f6f6f] border-l-transparent">
            <svg width="9" height="8" viewBox="0 0 9 8">
              <path d="M0 1h9" stroke="#555" strokeWidth="1.500" />
              <path d="M0 7h9L4.500 3z" fill="#555" />
            </svg>
          </div>
          <div className="flex h-[20px] w-full shrink-0 items-center justify-center border-r-2 border-b-2 border-[#6f6f6f]">
            <svg width="9" height="8" viewBox="0 0 9 8">
              <path d="M0 7h9" stroke="#222" strokeWidth="1.500" />
              <path d="M0 1h9L4.500 5z" fill="#222" />
            </svg>
          </div>
        </div>
      </div>
      <div className="flex h-[18px] items-center bg-[#f0f0f0]">
        {[
          "M2 2h8M6 11V4M3 7l3-3 3 3",
          "M6 12V2M3 5l3-3 3 3M3 9h6M3 7l3-3 3 3",
          "M6 11V5M3 8l3-3 3 3",
          "M6 2v7M3 6l3 3 3-3",
          "M6 1v10M3 8l3 3 3-3M3 4h6M3 5l3 3 3-3",
          "M2 11h8M6 1v8M3 6l3 3 3-3",
        ].map((d, i) => (
          <div key={d} className="flex h-[18px] w-[18.700px] items-center justify-center border-r-2 border-b-2 border-[#5f5f5f]">
            <svg width="12" height="13" viewBox="0 0 12 13">
              <path d={d} fill="none" stroke={i === 3 || i === 5 ? "#000" : "#555"} strokeWidth="2" />
            </svg>
          </div>
        ))}
        <div className="flex w-[19px] justify-center">
          <Chevron dir="left" />
        </div>
        <div className="h-[17px] w-[477px] bg-[#cdcdcd]" />
        <div className="flex w-[76px] justify-end pr-[3px]">
          <Chevron dir="right" />
        </div>
      </div>
    </div>
  );
}

function EntityDialog() {
  return (
    <div className="absolute top-[300px] left-[143px] flex h-[472px] w-[757px] flex-col border border-b-2 border-[#c48c68] bg-[#f0f0f0] text-[13px] text-[#222] shadow-[0_3px_16px_4px_rgba(0,0,0,0.35)]">
      <div className="flex h-[33px] shrink-0 items-center bg-white pl-[9px]">
        <Icon name="grid" size={17} />
        <span className="ml-[6px] flex-1 tracking-[0.350px]">Entity Properties - student (student)</span>
        <svg width="134" height="20" viewBox="0 0 134 20">
          <path d="M1 9.500h11" stroke="#ccc" />
          <rect x="51.500" y="3.500" width="11" height="11" fill="none" stroke="#333" strokeWidth="1.500" />
          <path d="M103 3.500l11 11M114 3.500l-11 11" stroke="#444" strokeWidth="1.500" />
        </svg>
      </div>
      <div className="flex h-[38px] shrink-0 items-end pl-[10px]">
        {dialogTabs.map(([label, width], i) => (
          <div
            key={label}
            className={`flex items-center justify-center border-t border-r border-[#dadada] tracking-[0.200px] ${width} ${
              i === 1 ? "h-[28px] bg-white pb-px" : "h-[25px]"
            } ${i ? "" : "border-l"}`}
          >
            {label}
          </div>
        ))}
      </div>
      <div className="ml-[10px] flex h-[345px] w-[734px] shrink-0 flex-col border border-[#dcdcdc] shadow-[inset_2px_2px_0_#fafafa,inset_-2px_-2px_0_#fafafa]">
        <div className="flex h-[42px] shrink-0 items-center pt-[4px] pl-[12px]">
          {dialogTools.map((group, g) => (
            <React.Fragment key={g}>
              {g > 0 && <span className="mx-[3px] h-[19px] w-[2px] bg-[#b0b0b0]" />}
              {group.map((name) => (
                <span
                  key={name}
                  className={`flex h-[25px] w-[25.900px] items-center justify-center ${
                    name === "filterOn" ? "border border-[#99c9ef] bg-[#c5dff5]" : ""
                  }`}
                >
                  <Icon name={name} />
                </span>
              ))}
            </React.Fragment>
          ))}
          <span className="ml-[8px]">
            <Caret />
          </span>
        </div>
        <AttributeGrid />
      </div>
      <div className="flex flex-1 items-center pt-[1px] pl-[8px] [font-family:'Liberation_Sans','Noto_Sans_CJK_SC',sans-serif] text-[13px]">
        <div className="flex h-[32px] w-[80px] items-center justify-center border-2 border-[#bdbdbd] bg-[#e1e1e1] text-xs">More &gt;&gt;</div>
        <span className="ml-[8px] flex w-[239px] items-center gap-[8px]">
          <Icon name="stackPrint" />
          <Caret />
        </span>
        <div className="flex h-[32px] w-[97px] items-center justify-center border-[3px] border-[#2f86d8] bg-[#e1e1e1]">确定</div>
        <div className="ml-[9px] flex h-[32px] w-[97px] items-center justify-center border-2 border-[#bdbdbd] bg-[#e1e1e1]">取消</div>
        <div className="ml-[8px] flex h-[32px] w-[96px] items-center justify-center bg-[#cccccc] text-[#999]">应用(A)</div>
        <div className="ml-[9px] flex h-[32px] w-[97px] items-center justify-center border-2 border-[#bdbdbd] bg-[#e1e1e1]">帮助</div>
      </div>
    </div>
  );
}

// [tail x, tail y, tip x, tip y]
const arrows = [
  [225, 544, 303, 437],
  [300, 541, 394, 437],
  [409, 562, 504, 433],
  [587, 553, 629, 438],
  [683, 518, 741, 438],
  [735, 532, 785, 433],
  [773, 530, 824, 434],
];

const arrowPoints = ([x1, y1, x2, y2]) => {
  const len = Math.hypot(x2 - x1, y2 - y1);
  const ux = (x2 - x1) / len;
  const uy = (y2 - y1) / len;
  const at = (back, side) => `${x2 - ux * back - uy * side},${y2 - uy * back + ux * side}`;
  return [at(0, 0), at(18, 9), at(17, 5.5), at(len, 0.8), at(len, -0.8), at(17, -5.5), at(18, -9)].join(" ");
};

export default function App() {
  return (
    <div className="relative flex h-[851px] w-[1281px] flex-col overflow-hidden bg-white pt-[8px] text-[#222] [font-family:'Noto_Sans','Noto_Sans_CJK_SC',sans-serif]">
      <svg width="0" height="0" className="absolute">
        <linearGradient id="folderGray" x2="1" y2="1">
          <stop offset="0" stopColor="#fff" />
          <stop offset="1" stopColor="#777" />
        </linearGradient>
        <linearGradient id="cyl">
          <stop offset="0" stopColor="#888" />
          <stop offset=".3" stopColor="#eee" />
          <stop offset="1" stopColor="#555" />
        </linearGradient>
      </svg>

      <div className="relative ml-[51px] flex h-[775px] w-[1077px] shrink-0 flex-col overflow-hidden border-r-2 border-[#8a8a8a] bg-[#f0f0f0]">
        <div className="flex h-[32px] shrink-0 items-center bg-white pl-[5px] text-[13.500px] text-[#9a9a9a]">
          <Icon name="logo" size={20} />
          <span className="ml-[5px] flex-1 tracking-[0.150px]">PowerDesigner [CDM 概念模型1, Diagram_1]</span>
          <svg width="137" height="20" viewBox="0 0 137 20">
            <path d="M6 9.500h11" stroke="#aaa" strokeWidth="1.300" />
            <rect x="55.500" y="3.500" width="11" height="11" fill="none" stroke="#999" strokeWidth="1.300" />
            <path d="M106 3.500l11 11M117 3.500l-11 11" stroke="#999" strokeWidth="1.300" />
          </svg>
        </div>
        <div className="flex h-[20px] shrink-0 items-center bg-gradient-to-b from-white to-[#d6d8da] pt-px pl-[6px] text-[13px] tracking-[0.300px] text-[#333]">
          {menus.map(([label, width]) => (
            <span key={label} className={width}>
              {label}
            </span>
          ))}
        </div>
        <div className="flex h-[33px] shrink-0 items-start bg-gradient-to-b from-[#fafbfc] to-[#cdcfd2] pl-[1.600px]">
          <ToolGroup items={toolbarA} />
          <span className="w-[2px]" />
          <Overflow />
          <span className="w-px" />
          <ToolGroup items={toolbarB} />
          <span className="w-px" />
          <Overflow />
          <span className="w-[2px]" />
          <ToolGroup items={toolbarC} active={["winFind", "note"]} />
          <Overflow />
          <span className="w-[5px]" />
          <Overflow dark />
        </div>
        <div className="flex h-[431px] shrink-0">
          <ObjectBrowser />
          <DiagramArea />
          <Toolbox />
        </div>
        <div className="h-[8px] shrink-0 bg-gradient-to-r from-[#d4d0c8] to-[#f2f2f2]" />
        <Output />
        <div className="flex flex-1 items-center bg-gradient-to-b from-[#fbfcfd] to-[#d2d5d8] pt-[2px] pl-[11px] text-[13px]">
          <span className="flex-1 tracking-[0.350px]">Entity 'student'</span>
          <svg width="16" height="16" viewBox="0 0 16 16" className="self-end">
            <path d="M13 3v12M10 6v9M7 9v6M4 12v3" stroke="#a9b5c9" strokeWidth="1.500" strokeDasharray="1.500 1.500" />
          </svg>
        </div>

        <EntityDialog />
      </div>

      <p className="mt-[23px] ml-[46px] text-2xl leading-[34px] text-[#333]">在此上图说明name和code的起名方法</p>
      <span className="absolute top-[822px] left-[1129px] [font-family:'Liberation_Sans','Noto_Sans_CJK_SC',sans-serif] text-[16.800px] leading-[22px] whitespace-nowrap text-[#858585]">
        CSDN @赤脚的我
      </span>

      <svg width="1281" height="851" className="absolute top-0 left-0">
        {arrows.map((a) => (
          <polygon key={a[0]} points={arrowPoints(a)} fill="#fb3b3c" />
        ))}
      </svg>
    </div>
  );
}
